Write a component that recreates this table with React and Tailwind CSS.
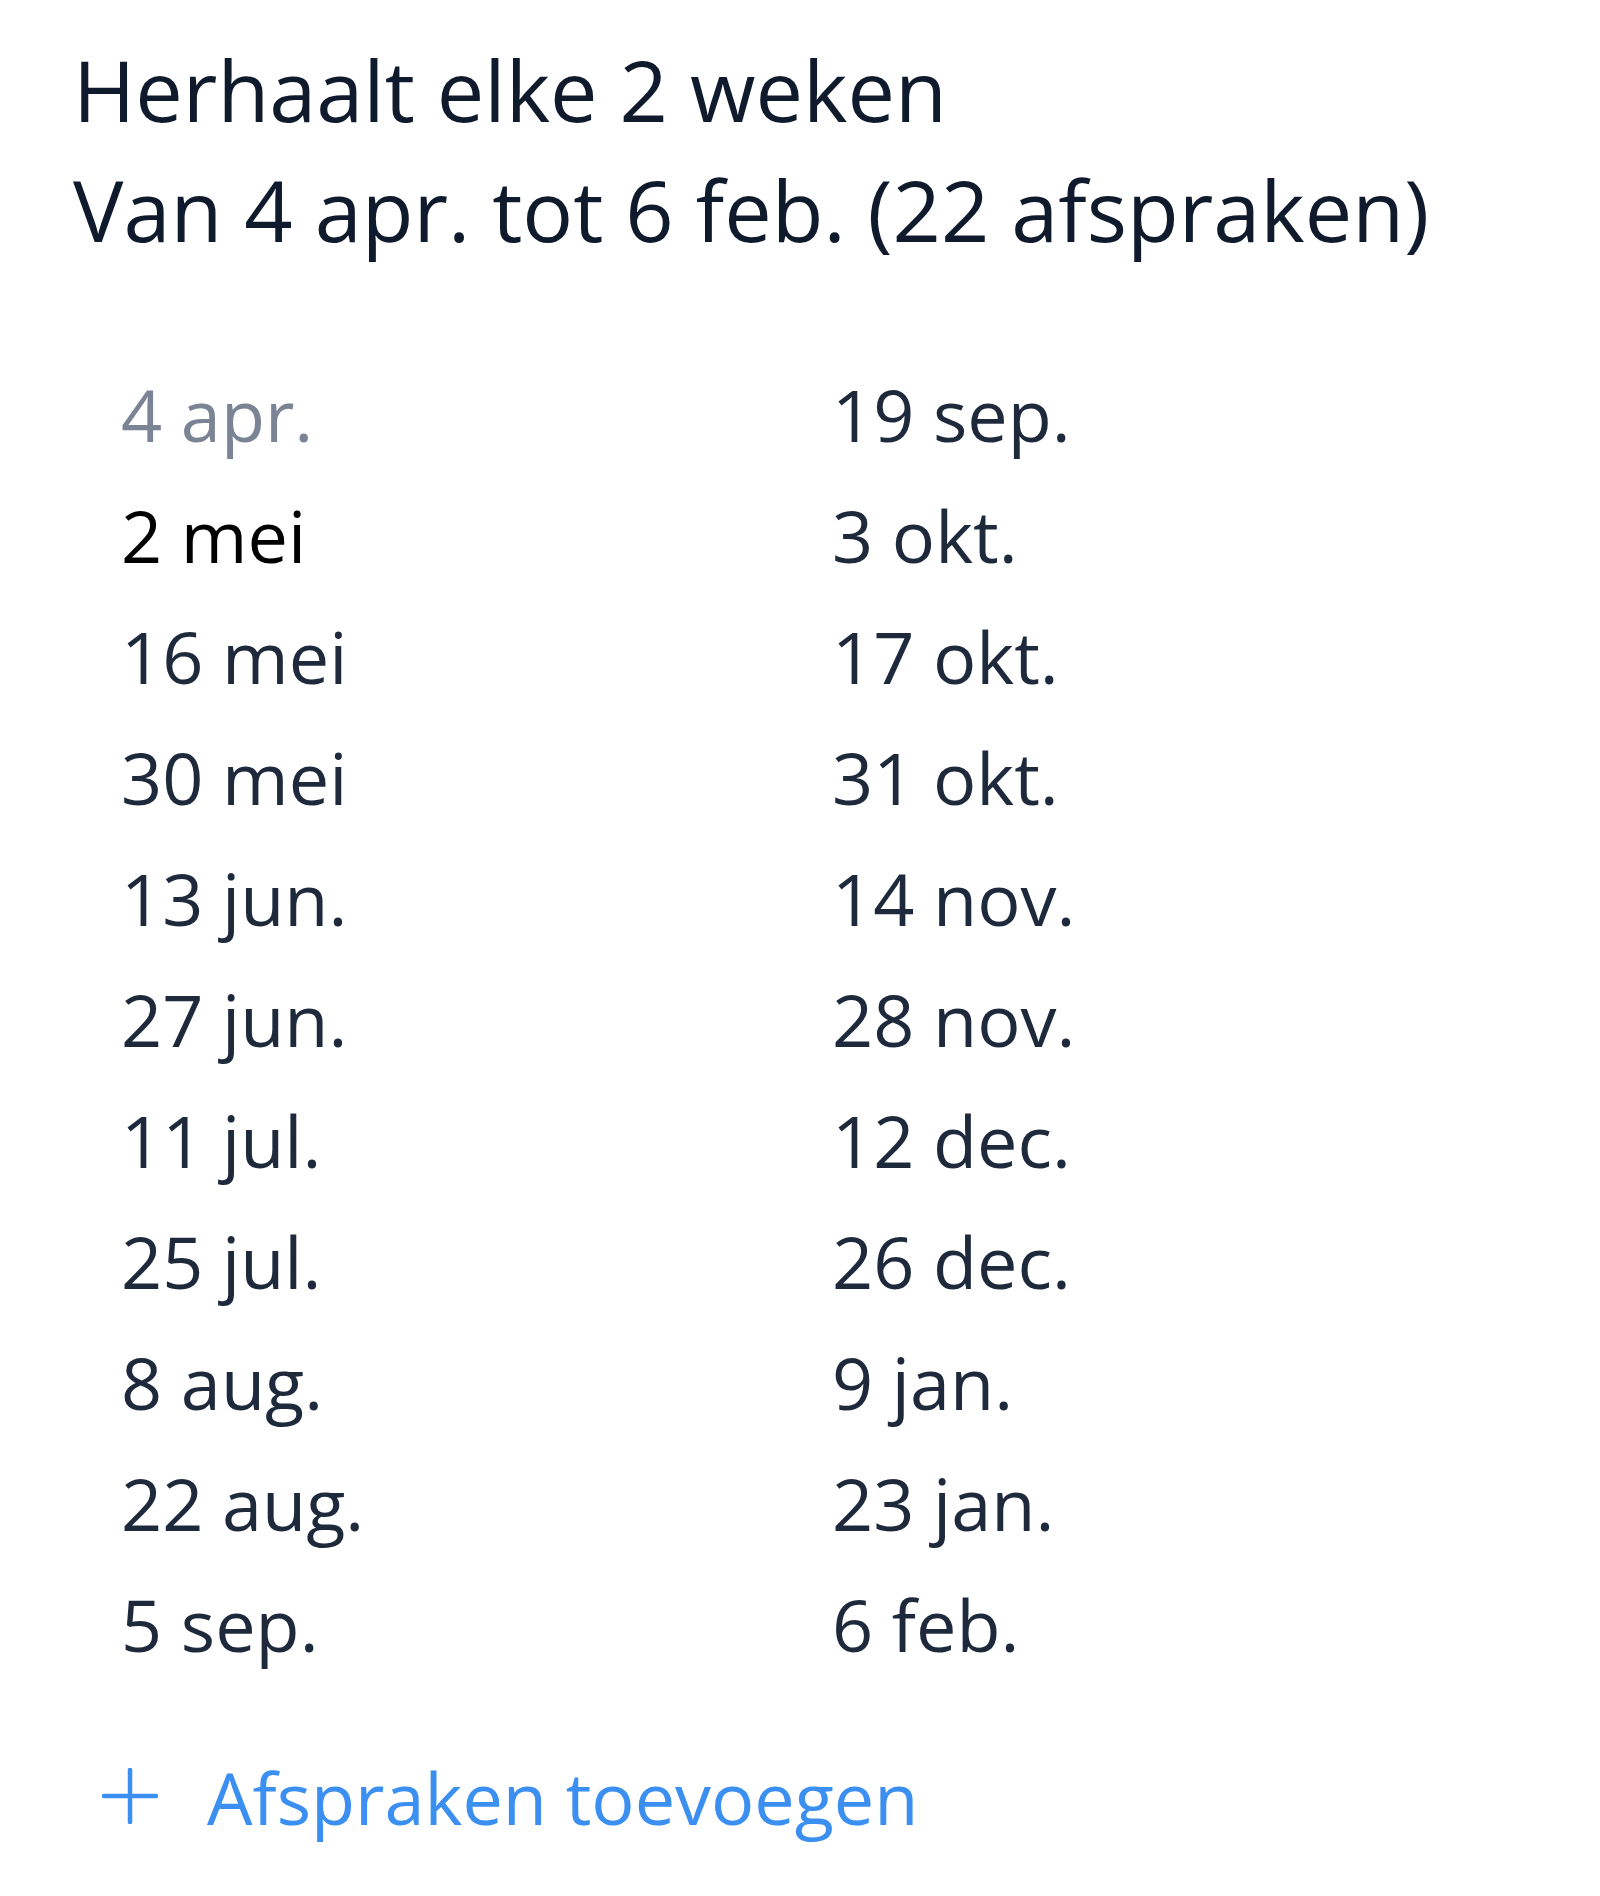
import React from "react";

const left = ["4 apr.", "2 mei", "16 mei", "30 mei", "13 jun.", "27 jun.", "11 jul.", "25 jul.", "8 aug.", "22 aug.", "5 sep."];
const right = ["19 sep.", "3 okt.", "17 okt.", "31 okt.", "14 nov.", "28 nov.", "12 dec.", "26 dec.", "9 jan.", "23 jan.", "6 feb."];

function colorFor(col, i) {
  if (col === 0 && i === 0) return "text-[#7a8494]";
  if (col === 0 && i === 1) return "text-[#000000]";
  return "text-[#1e2a3c]";
}

export default function App() {
  return (
    <div
      className="w-[1600px] h-[1896px] bg-white pt-[30px] pl-[73px]"
      style={{ fontFamily: '"Open Sans", "Noto Sans", sans-serif' }}
    >
      <div className="text-[84.6px] leading-[120px] text-[#0f1a2c] whitespace-nowrap">
        <div>Herhaalt elke 2 weken</div>
        <div>Van 4 apr. tot 6 feb. (22 afspraken)</div>
      </div>

      <div className="mt-[84px] ml-[48px] grid grid-cols-[711px_auto] text-[72px] leading-[121px]">
        {[left, right].map((col, c) => (
          <div key={c} className="flex flex-col">
            {col.map((d, i) => (
              <div key={d} className={colorFor(c, i)}>
                {d}
              </div>
            ))}
          </div>
        ))}
      </div>

      <div className="mt-[52px] ml-[29px] flex items-center text-[72px] leading-[121px] text-[#3b8ff0]">
        <svg width="56" height="56" viewBox="0 0 56 56" className="shrink-0 mt-[-4px]">
          <path d="M28 2 V54 M2 28 H54" stroke="#3b8ff0" strokeWidth="4.5" strokeLinecap="round" fill="none" />
        </svg>
        <span className="ml-[49px]">Afspraken toevoegen</span>
      </div>
    </div>
  );
}
